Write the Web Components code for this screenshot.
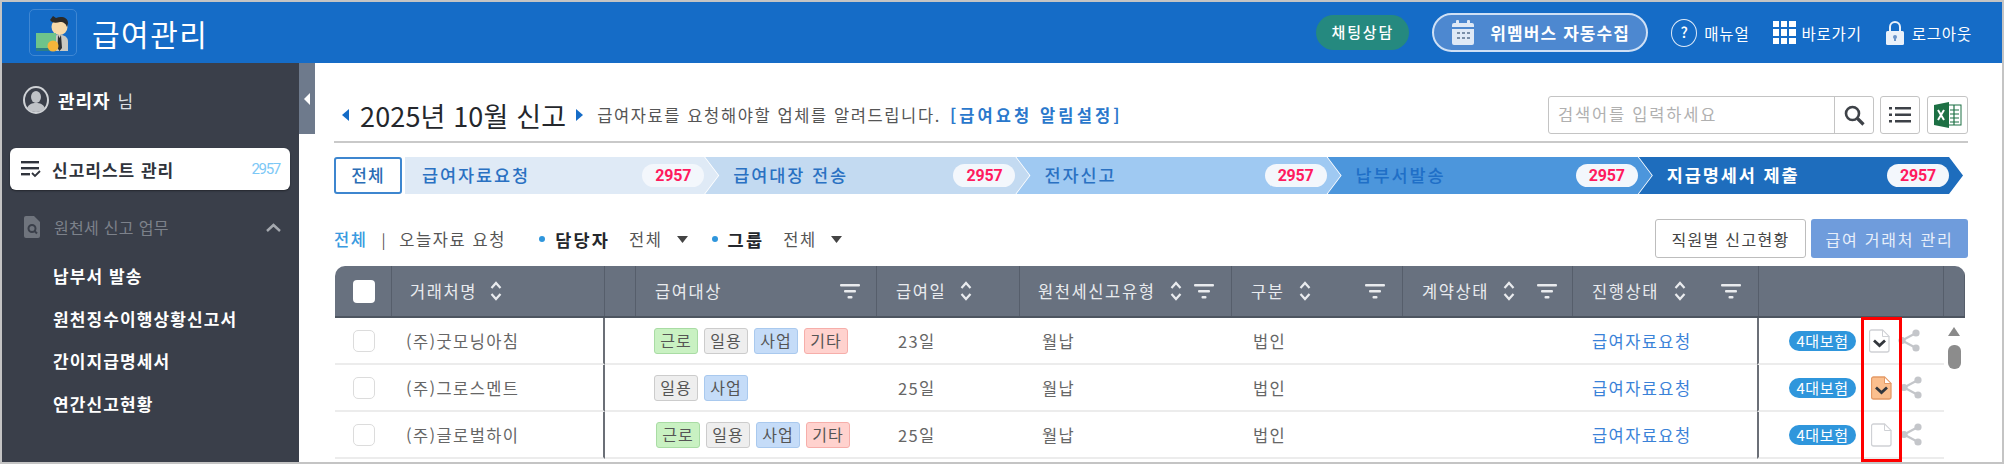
<!DOCTYPE html>
<html lang="ko">
<head>
<meta charset="utf-8">
<title>급여관리</title>
<style>
  html, body { margin: 0; padding: 0; height: 100%; overflow: hidden; background: #c4c4c4; }
  body { font-family: "Noto Sans CJK KR", "Noto Sans", sans-serif; }
</style>
</head>
<body>
<pay-app></pay-app>

<script>
/* ---- shared icons ---- */
const ICON = {
  sort: `<svg width="12" height="20" viewBox="0 0 12 20" fill="none" stroke="currentColor" stroke-width="2.2"><path d="M1.5 7 6 2l4.5 5M1.5 13 6 18l4.5-5"/></svg>`,
  filter: `<svg width="20" height="16" viewBox="0 0 20 16" fill="currentColor"><rect x="0" y="1" width="20" height="2.4" rx="1"/><rect x="4" y="7" width="12" height="2.4" rx="1"/><rect x="7.5" y="13" width="5" height="2.4" rx="1"/></svg>`,
  share: `<svg width="22" height="23" viewBox="0 0 22 23"><path d="M18 4 4 11.5 18 19" fill="none" stroke="#c4c6ca" stroke-width="2.2"/><circle cx="18" cy="4" r="3.6" fill="#c4c6ca"/><circle cx="4" cy="11.5" r="3.6" fill="#c4c6ca"/><circle cx="18" cy="19" r="3.6" fill="#c4c6ca"/></svg>`,
  caret: `<svg width="11" height="7" viewBox="0 0 11 7" fill="#444"><path d="M0 0h11L5.500 7z"/></svg>`
};
const docIcon = (fill, stroke, check) => `<svg width="21" height="24" viewBox="0 0 21 24"><path d="M2.500 1h11l6.500 6.500V21a2 2 0 0 1-2 2H2.500a2 2 0 0 1-2-2V3a2 2 0 0 1 2-2z" fill="${fill}" stroke="${stroke}" stroke-width="1.300"/><path d="M13.500 1v6.500H20z" fill="#fff" stroke="${stroke}" stroke-width="1"/>${check ? '<path d="M5 11.500l5.500 5 5.500-5" fill="none" stroke="#33373d" stroke-width="2.800"/>' : ''}</svg>`;

/* ---- header ---- */
class PayHeader extends HTMLElement {
  constructor() {
    super();
    this.attachShadow({ mode: 'open' }).innerHTML = `
<style>
  :host { display: flex; align-items: center; height: 61px; background: #156cc7; color: #fff; padding-left: 27px; padding-right: 30px; flex: none; }
  .logo { width: 48px; height: 47px; box-sizing: border-box; border: 1px solid #3f87d3; border-radius: 5px; display: flex; align-items: center; justify-content: center; flex: none; }
  h1 { margin: 0 0 0 15px; font-size: 30px; font-weight: 400; letter-spacing: 1.500px; line-height: 40px; }
  .right { margin-left: auto; display: flex; align-items: center; font-size: 15.500px; letter-spacing: .8px; }
  .chat { width: 93px; height: 35px; line-height: 34px; background: #25897f; border-radius: 18px; text-align: center; font-weight: 500; font-size: 15px; letter-spacing: 1.800px; }
  .collect { margin-left: 23px; width: 216px; height: 39px; box-sizing: border-box; border: 2px solid #cfe0f5; border-radius: 20px; background: #4d88d0; display: flex; align-items: center; padding-left: 18px; font-weight: 700; font-size: 17px; letter-spacing: 1.100px; gap: 16px; white-space: nowrap; }
  .item { display: flex; align-items: center; gap: 7px; white-space: nowrap; }
  .help { margin-left: 23px; }
  .apps { margin-left: 23px; gap: 6px; }
  .lock { margin-left: 24px; gap: 8px; }
  .circle { width: 26px; height: 28px; box-sizing: border-box; border: 1.500px solid #dce9f8; border-radius: 50%; text-align: center; line-height: 24px; font-size: 15px; font-weight: 500; letter-spacing: 0; }
  .grid { width: 23px; height: 23px; display: grid; grid-template-columns: repeat(3, 1fr); gap: 2px; }
  .grid i { background: #fff; }
</style>
<div class="logo">
  <svg width="44" height="40" viewBox="0 0 44 40">
    <path d="M20 27c1-3 3-4 6-5h5c4 1 6 3 6 7v9H20z" fill="#c9c9c2"/>
    <path d="M27 22l1.500 3 1.500-3 1 13-2.500 3-2-3z" fill="#2b2f33"/>
    <circle cx="28.500" cy="14" r="8" fill="#f6d9a8"/>
    <path d="M19 7l3-4 3 2c5-2 12-1 12 5l-1 4c-1-3-3-5-7-5-3 1-6 1-8 0z" fill="#2b2a28"/>
    <rect x="5" y="20" width="20" height="15" fill="#6ec48b"/>
    <rect x="5" y="35" width="20" height="3" fill="#2d7f86"/>
    <circle cx="22" cy="33" r="5.500" fill="#f5b53a"/>
  </svg>
</div>
<h1>급여관리</h1>
<div class="right">
  <div class="chat">채팅상담</div>
  <div class="collect">
    <svg width="22" height="25" viewBox="0 0 22 25" fill="#dfe9f6"><rect x="4" y="0" width="3" height="5" rx="1"/><rect x="15" y="0" width="3" height="5" rx="1"/><path d="M2 3h18a2 2 0 0 1 2 2v2H0V5a2 2 0 0 1 2-2z"/><path d="M0 9h22v14a2 2 0 0 1-2 2H2a2 2 0 0 1-2-2z"/><g fill="#7a8fa8"><rect x="5" y="12" width="3" height="2"/><rect x="10" y="12" width="3" height="2"/><rect x="15" y="12" width="3" height="2"/><rect x="5" y="17" width="3" height="2"/><rect x="10" y="17" width="3" height="2"/><rect x="15" y="17" width="3" height="2"/></g></svg>
    <span>위멤버스 자동수집</span>
  </div>
  <div class="item help"><div class="circle">?</div><span>매뉴얼</span></div>
  <div class="item apps"><div class="grid"><i></i><i></i><i></i><i></i><i></i><i></i><i></i><i></i><i></i></div><span>바로가기</span></div>
  <div class="item lock">
    <svg width="18" height="24" viewBox="0 0 18 24"><path d="M4 11V6a5 5 0 0 1 10 0v5" fill="none" stroke="#eaf1fa" stroke-width="2"/><rect x="0" y="10" width="18" height="14" rx="1.500" fill="#eaf1fa"/><circle cx="9" cy="16" r="2" fill="#6a94c9"/><rect x="8" y="16" width="2" height="4" fill="#6a94c9"/></svg>
    <span>로그아웃</span>
  </div>
</div>`;
  }
}

/* ---- sidebar ---- */
class PaySidebar extends HTMLElement {
  constructor() {
    super();
    const links = ['납부서 발송', '원천징수이행상황신고서', '간이지급명세서', '연간신고현황'];
    this.attachShadow({ mode: 'open' }).innerHTML = `
<style>
  :host { display: block; width: 297px; flex: none; background: #3a3f4a; color: #fff; box-sizing: border-box; padding: 23px 9px 0 8px; }
  .user { display: flex; align-items: center; gap: 9px; height: 28px; padding-left: 13px; font-size: 17px; color: #dde0e4; white-space: nowrap; }
  .user b { font-size: 18px; color: #fff; font-weight: 700; letter-spacing: 1px; margin-right: 2px; }
  .active { margin-top: 34px; height: 42px; background: #fff; border-radius: 6px; display: flex; align-items: center; color: #30343c; padding-left: 11px; box-shadow: 0 1px 2px rgba(0,0,0,.4); }
  .active strong { margin-left: 11px; font-size: 17px; font-weight: 700; letter-spacing: 1px; white-space: nowrap; }
  .active em { margin-left: auto; margin-right: 10px; font-style: normal; font-size: 15px; color: #7cc8f6; letter-spacing: -1.300px; font-family: Roboto, sans-serif; }
  .group { margin-top: 25px; height: 24px; display: flex; align-items: center; padding-left: 14px; color: #7d828b; font-size: 16px; }
  .group span { margin-left: 14px; letter-spacing: .3px; white-space: nowrap; }
  .group svg:last-child { margin-left: auto; margin-right: 9px; }
  ul { list-style: none; margin: 16px 0 0; padding: 0 0 0 43px; }
  li { height: 42.500px; line-height: 42px; font-size: 17px; font-weight: 700; letter-spacing: 1.100px; white-space: nowrap; }
</style>
<div class="user">
  <svg width="26" height="28" viewBox="0 0 26 28"><ellipse cx="13" cy="14" rx="12" ry="13" fill="#3a3f4a" stroke="#cfd2d6" stroke-width="2"/><ellipse cx="13" cy="11" rx="5" ry="6" fill="#bfc2c7"/><path d="M4 22c2-4 5-5 9-5s7 1 9 5c-2 3-5 4-9 4s-7-1-9-4z" fill="#bfc2c7"/></svg>
  <span><b>관리자</b> 님</span>
</div>
<div class="active">
  <svg width="20" height="18" viewBox="0 0 20 18" fill="#30343c"><rect y="1" width="18" height="2.400"/><rect y="7" width="18" height="2.400"/><rect y="13" width="9" height="2.400"/><path d="M11 13l3 3 5-5" fill="none" stroke="#30343c" stroke-width="1.800"/></svg>
  <strong>신고리스트 관리</strong>
  <em>2957</em>
</div>
<div class="group">
  <svg width="16" height="22" viewBox="0 0 16 22"><path d="M2 0h8l6 6v14a2 2 0 0 1-2 2H2a2 2 0 0 1-2-2V2a2 2 0 0 1 2-2z" fill="#6f747d"/><circle cx="8" cy="12.500" r="3.500" fill="none" stroke="#3a3f4a" stroke-width="2"/><path d="M10.500 15l2.500 2.500" stroke="#3a3f4a" stroke-width="2"/></svg>
  <span>원천세 신고 업무</span>
  <svg width="15" height="9" viewBox="0 0 15 9" fill="none" stroke="#a5a9af" stroke-width="2.400"><path d="M1 8l6.500-6L14 8"/></svg>
</div>
<ul>${links.map(t => `<li>${t}</li>`).join('')}</ul>`;
  }
}

/* ---- title row with month switch and search ---- */
class PayToolbar extends HTMLElement {
  constructor() {
    super();
    this.attachShadow({ mode: 'open' }).innerHTML = `
<style>
  :host { display: flex; align-items: center; height: 46px; padding-top: 29px; padding-bottom: 3px; border-bottom: 2px solid #c9c9c9; box-sizing: content-box; }
  .arrow { width: 0; height: 0; border-top: 6px solid transparent; border-bottom: 6px solid transparent; flex: none; }
  .prev { border-right: 7px solid #156cc7; margin-left: 8px; }
  .next { border-left: 7px solid #156cc7; margin-left: 10px; }
  h2 { margin: 0 0 0 11px; font-size: 27px; font-weight: 400; color: #24272c; letter-spacing: .15px; white-space: nowrap; }
  .msg { margin-left: 14px; font-size: 16.500px; color: #555; letter-spacing: 1.600px; white-space: nowrap; }
  .set { margin-left: 9px; font-size: 16.500px; font-weight: 700; color: #2a78cc; letter-spacing: 3.100px; white-space: nowrap; }
  .search { margin-left: auto; width: 326px; height: 38px; box-sizing: border-box; border: 1.500px solid #c4c4c4; border-radius: 3px; display: flex; flex: none; }
  .search span { flex: 1; padding-left: 9px; line-height: 34px; font-size: 16.500px; letter-spacing: 1.800px; color: #b0b0b0; white-space: nowrap; }
  .search i { width: 38px; border-left: 1px solid #c4c4c4; display: flex; align-items: center; justify-content: center; }
  .btn { margin-left: 6px; width: 40px; height: 38px; box-sizing: border-box; border: 1.500px solid #c4c4c4; border-radius: 3px; display: flex; align-items: center; justify-content: center; flex: none; }
  .xls { margin-left: 7px; width: 41px; }
</style>
<div class="arrow prev"></div>
<h2>2025년 10월 신고</h2>
<div class="arrow next"></div>
<span class="msg">급여자료를 요청해야할 업체를 알려드립니다.</span>
<span class="set">[급여요청 알림설정]</span>
<div class="search">
  <span>검색어를 입력하세요</span>
  <i><svg width="21" height="21" viewBox="0 0 21 21" fill="none" stroke="#3e4248"><circle cx="8.500" cy="8.500" r="6.500" stroke-width="2.600"/><path d="M13.500 13.500l6 6" stroke-width="3.200"/></svg></i>
</div>
<div class="btn"><svg width="22" height="16" viewBox="0 0 22 16" fill="#3e4248"><rect width="3" height="2.500"/><rect x="6" width="16" height="2.500"/><rect y="6.500" width="3" height="2.500"/><rect x="6" y="6.500" width="16" height="2.500"/><rect y="13" width="3" height="2.500"/><rect x="6" y="13" width="16" height="2.500"/></svg></div>
<div class="btn xls"><svg width="28" height="26" viewBox="0 0 28 26"><rect x="12" y="3" width="15" height="20" fill="#fff" stroke="#1d7044"/><path d="M16 8h9M16 12h9M16 16h9M16 20h9M20 3v20" stroke="#1d7044" stroke-width="1.200"/><path d="M0 3l15-3v26L0 23z" fill="#1d7044"/><path d="M4 8l6 10M10 8l-6 10" stroke="#fff" stroke-width="2"/></svg></div>`;
  }
}

/* ---- chevron steps ---- */
class PayStep extends HTMLElement {
  constructor() {
    super();
    this.attachShadow({ mode: 'open' }).innerHTML = `
<style>
  :host { display: flex; align-items: center; height: 37px; flex: 1 1 0; margin-left: -13px; padding-left: 28px; padding-right: 14px; box-sizing: border-box;
    background: var(--bg); color: var(--fg); font-size: 17.500px; font-weight: var(--fw, 500); letter-spacing: 1.900px; white-space: nowrap;
    clip-path: polygon(0 0, calc(100% - 14px) 0, 100% 50%, calc(100% - 14px) 100%, 0 100%, 14px 50%); }
  :host([first]) { margin-left: 0; padding-left: 17px; clip-path: polygon(0 0, calc(100% - 14px) 0, 100% 50%, calc(100% - 14px) 100%, 0 100%); }
  slot { display: block; margin-top: -3px; }
  b { margin-left: auto; margin-right: 0; width: 62px; height: 23px; line-height: 23px; text-align: center; border-radius: 12px; background: #f3f7fc;
    font-family: Roboto, sans-serif; font-size: 16px; font-weight: 700; color: #ff1a5e; letter-spacing: -.2px; }
</style>
<slot></slot><b></b>`;
  }
  connectedCallback() { this.shadowRoot.querySelector('b').textContent = this.getAttribute('count'); }
}

class PaySteps extends HTMLElement {
  constructor() {
    super();
    this.attachShadow({ mode: 'open' }).innerHTML = `
<style>
  :host { display: flex; align-items: center; margin-top: 14px; margin-right: 5px; }
  .all { width: 68px; height: 37px; box-sizing: border-box; border: 2px solid #3d86cf; border-radius: 3px; color: #2a6db5; font-size: 17px; font-weight: 500; letter-spacing: 1.200px; text-align: center; line-height: 32px; margin-right: 3px; flex: none; }
</style>
<div class="all">전체</div><slot></slot>`;
  }
}

/* ---- filters ---- */
class PayFilters extends HTMLElement {
  constructor() {
    super();
    this.attachShadow({ mode: 'open' }).innerHTML = `
<style>
  :host { display: flex; align-items: center; height: 40px; margin-top: 25px; font-size: 16.500px; letter-spacing: 1.600px; color: #555; white-space: nowrap; }
  .on { color: #3a9ae0; font-weight: 500; }
  .bar { margin: 0 12px 0 14px; color: #555; font-size: 15px; }
  .dot { width: 6px; height: 6px; border-radius: 50%; background: #2f96dc; margin-right: 10px; flex: none; }
  b { color: #24272c; font-weight: 700; font-size: 17.500px; letter-spacing: 2.200px; }
  .val { margin-left: 19px; margin-right: 14px; }
  .f1 { margin-left: 33px; }
  .f2 { margin-left: 24px; }
  .btns { margin-left: auto; display: flex; gap: 5px; align-self: flex-start; }
  .b1, .b2 { height: 39px; box-sizing: border-box; border-radius: 3px; display: flex; align-items: center; justify-content: center; font-size: 16px; }
  .b1 { width: 151px; border: 1.500px solid #bdbdbd; color: #444; letter-spacing: 1.300px; }
  .b2 { width: 157px; background: #6f9cdc; color: #e8effa; letter-spacing: 1.800px; }
</style>
<span class="on">전체</span><span class="bar">|</span><span>오늘자료 요청</span>
<i class="dot f1"></i><b>담당자</b><span class="val">전체</span>${ICON.caret}
<i class="dot f2"></i><b>그룹</b><span class="val">전체</span>${ICON.caret}
<div class="btns"><div class="b1">직원별 신고현황</div><div class="b2">급여 거래처 관리</div></div>`;
  }
}

/* ---- table ---- */
const COLS = '57px 213px 31px 241px 143px 212px 171px 170px 186px 185px 21px';

class PayHeadCell extends HTMLElement {
  constructor() {
    super();
    this.attachShadow({ mode: 'open' }).innerHTML = `
<style>
  :host { display: flex; align-items: center; height: 100%; box-sizing: border-box; border-right: 1px solid #565e6b; color: #e9ebee; font-size: 16.500px; letter-spacing: 1.600px; white-space: nowrap; }
  span { display: inline-flex; }
  span:empty { display: none; }
  .sort { margin-left: var(--sort-gap, 15px); }
  .filter { margin-left: var(--filter-gap, 15px); }
</style>
<slot></slot><span class="sort"></span><span class="filter"></span>`;
  }
  connectedCallback() {
    this.style.paddingLeft = (this.getAttribute('pad') || 0) + 'px';
    if (this.hasAttribute('sort')) this.shadowRoot.querySelector('.sort').innerHTML = ICON.sort;
    if (this.hasAttribute('filter')) this.shadowRoot.querySelector('.filter').innerHTML = ICON.filter;
    if (this.hasAttribute('sort-gap')) this.style.setProperty('--sort-gap', this.getAttribute('sort-gap') + 'px');
    if (this.hasAttribute('filter-gap')) this.style.setProperty('--filter-gap', this.getAttribute('filter-gap') + 'px');
  }
}

class PayTag extends HTMLElement {
  constructor() {
    super();
    this.attachShadow({ mode: 'open' }).innerHTML = `
<style>
  :host { display: block; flex: none; width: 44px; height: 26px; box-sizing: border-box; border: 1.500px solid #ccc; border-radius: 3px; background: #eee; color: #555; font-size: 16px; letter-spacing: 1px; line-height: 22px; text-align: center; }
  :host([kind="근로"]) { background: #c9f1c2; border-color: #a9dca4; }
  :host([kind="사업"]) { background: #c5dcf8; border-color: #a9c9ee; }
  :host([kind="기타"]) { background: #ffd2ce; border-color: #f6aeaa; }
</style>
<slot></slot>`;
  }
  connectedCallback() { this.textContent = this.getAttribute('kind'); }
}

class PayRow extends HTMLElement {
  constructor() {
    super();
    this.attachShadow({ mode: 'open' });
  }
  connectedCallback() {
    const name = this.getAttribute('name');
    const tags = this.getAttribute('tags').split(',');
    const doc = this.getAttribute('doc');
    const docSvg = doc === 'done' ? docIcon('#fff', '#cfd1d5', true)
      : doc === 'new' ? docIcon('#fbbf8e', '#e59a66', true)
      : docIcon('#fff', '#cfd1d5', false);
    this.shadowRoot.innerHTML = `
<style>
  :host { display: grid; grid-template-columns: ${COLS}; height: 47px; box-sizing: border-box; font-size: 16.500px; letter-spacing: 1.400px; color: #666; }
  .c { display: flex; align-items: center; border-bottom: 2px solid #ececec; height: 47px; box-sizing: border-box; white-space: nowrap; }
  .check { padding-left: 18px; }
  .check i { width: 22px; height: 22px; box-sizing: border-box; border: 1.500px solid #dcdcdc; border-radius: 5px; }
  .name { padding-left: 14px; border-right: 2px solid #6b6f77; }
  .tags { grid-column: 3 / 5; padding-left: ${this.hasAttribute('shift') ? 51 : 49}px; gap: 6px; }
  .date { padding-left: 21px; }
  .type { padding-left: 22px; }
  .gubun { padding-left: 21px; }
  .status { padding-left: 19px; color: #3a82d8; }
  .act { border-left: 2px solid #6b6f77; margin-left: -2px; padding-left: 30px; }
  .ins { width: 67px; height: 20px; line-height: 20px; border-radius: 10px; background: #2f96dc; color: #fff; font-size: 15px; text-align: center; letter-spacing: .6px; margin-right: ${doc === 'done' ? 13 : 15}px; flex: none; }
  .doc { display: flex; }
  .share { margin-left: 8px; display: flex; }
  .side { border-bottom: 0; }
</style>
<div class="c check"><i></i></div>
<div class="c name"><span>${name}</span></div>
<div class="c tags">${tags.map(k => `<pay-tag kind="${k}"></pay-tag>`).join('')}</div>
<div class="c date"><span>${this.getAttribute('date')}</span></div>
<div class="c type"><span>월납</span></div>
<div class="c gubun"><span>법인</span></div>
<div class="c"></div>
<div class="c status"><span>급여자료요청</span></div>
<div class="c act"><div class="ins">4대보험</div><div class="doc">${docSvg}</div><div class="share">${ICON.share}</div></div>
<div class="c side"></div>`;
  }
}

class PayTable extends HTMLElement {
  constructor() {
    super();
    this.attachShadow({ mode: 'open' }).innerHTML = `
<style>
  :host { display: block; position: relative; margin-top: 7px; margin-right: 3px; margin-left: 1px; }
  .head { display: grid; grid-template-columns: ${COLS}; height: 50px; background: #68717f; border-radius: 10px 10px 0 0; border-bottom: 2px solid #4d5560; box-sizing: content-box; overflow: hidden; }
  .box { margin-left: 18px; width: 22px; height: 23px; background: #fff; border-radius: 4px; flex: none; }
  .scroll { position: absolute; right: 4px; top: 61px; width: 13px; }
  .up { width: 0; height: 0; border-left: 6.500px solid transparent; border-right: 6.500px solid transparent; border-bottom: 9px solid #8a8a8a; }
  .thumb { margin-top: 9px; height: 24px; background: #8c8c8c; border-radius: 6px; }
  /* 강조 표시 (빨간 박스) */
  .mark { position: absolute; left: 1526px; top: 51px; width: 41px; height: 145px; box-sizing: border-box; border: 3px solid #f00; pointer-events: none; }
</style>
<div class="head">
  <pay-head-cell><div class="box"></div></pay-head-cell>
  <pay-head-cell pad="18" sort sort-gap="13">거래처명</pay-head-cell>
  <pay-head-cell></pay-head-cell>
  <pay-head-cell pad="19" filter filter-gap="118">급여대상</pay-head-cell>
  <pay-head-cell pad="19" sort sort-gap="14">급여일</pay-head-cell>
  <pay-head-cell pad="18" sort filter sort-gap="15" filter-gap="12">원천세신고유형</pay-head-cell>
  <pay-head-cell pad="19" sort filter sort-gap="14" filter-gap="54">구분</pay-head-cell>
  <pay-head-cell pad="19" sort filter sort-gap="14" filter-gap="22">계약상태</pay-head-cell>
  <pay-head-cell pad="19" sort filter sort-gap="15" filter-gap="35">진행상태</pay-head-cell>
  <pay-head-cell></pay-head-cell>
  <pay-head-cell></pay-head-cell>
</div>
<slot></slot>
<div class="scroll"><div class="up"></div><div class="thumb"></div></div>
<div class="mark"></div>`;
  }
}

/* ---- page shell ---- */
class PayApp extends HTMLElement {
  constructor() {
    super();
    this.attachShadow({ mode: 'open' }).innerHTML = `
<style>
  :host { display: flex; flex-direction: column; height: 464px; box-sizing: border-box; padding: 2px; overflow: hidden; }
  .body { display: flex; flex: 1; min-height: 0; background: #fff; }
  .toggle { width: 16px; height: 71px; background: #6e7a8c; flex: none; display: flex; align-items: center; justify-content: center; }
  .toggle i { width: 0; height: 0; border-top: 6px solid transparent; border-bottom: 6px solid transparent; border-right: 6px solid #fff; }
  main { flex: 1; min-width: 0; padding-left: 19px; padding-right: 34px; overflow: hidden; }
</style>
<pay-header></pay-header>
<div class="body">
  <pay-sidebar></pay-sidebar>
  <div class="toggle"><i></i></div>
  <main>
    <pay-toolbar></pay-toolbar>
    <pay-steps>
      <pay-step first count="2957" style="--bg:#dfeaf6;--fg:#2a71c2">급여자료요청</pay-step>
      <pay-step count="2957" style="--bg:#c3daf1;--fg:#2a71c2">급여대장 전송</pay-step>
      <pay-step count="2957" style="--bg:#9fc9f2;--fg:#2a71c2">전자신고</pay-step>
      <pay-step count="2957" style="--bg:#4c96dc;--fg:#1f6fc7">납부서발송</pay-step>
      <pay-step count="2957" style="--bg:#1e6dbd;--fg:#fff;--fw:700">지급명세서 제출</pay-step>
    </pay-steps>
    <pay-filters></pay-filters>
    <pay-table>
      <pay-row name="(주)굿모닝아침" tags="근로,일용,사업,기타" date="23일" doc="done"></pay-row>
      <pay-row name="(주)그로스멘트" tags="일용,사업" date="25일" doc="new"></pay-row>
      <pay-row name="(주)글로벌하이" tags="근로,일용,사업,기타" date="25일" doc="none" shift></pay-row>
    </pay-table>
  </main>
</div>`;
  }
}

customElements.define('pay-header', PayHeader);
customElements.define('pay-sidebar', PaySidebar);
customElements.define('pay-toolbar', PayToolbar);
customElements.define('pay-step', PayStep);
customElements.define('pay-steps', PaySteps);
customElements.define('pay-filters', PayFilters);
customElements.define('pay-head-cell', PayHeadCell);
customElements.define('pay-tag', PayTag);
customElements.define('pay-row', PayRow);
customElements.define('pay-table', PayTable);
customElements.define('pay-app', PayApp);
</script>
</body>
</html>
